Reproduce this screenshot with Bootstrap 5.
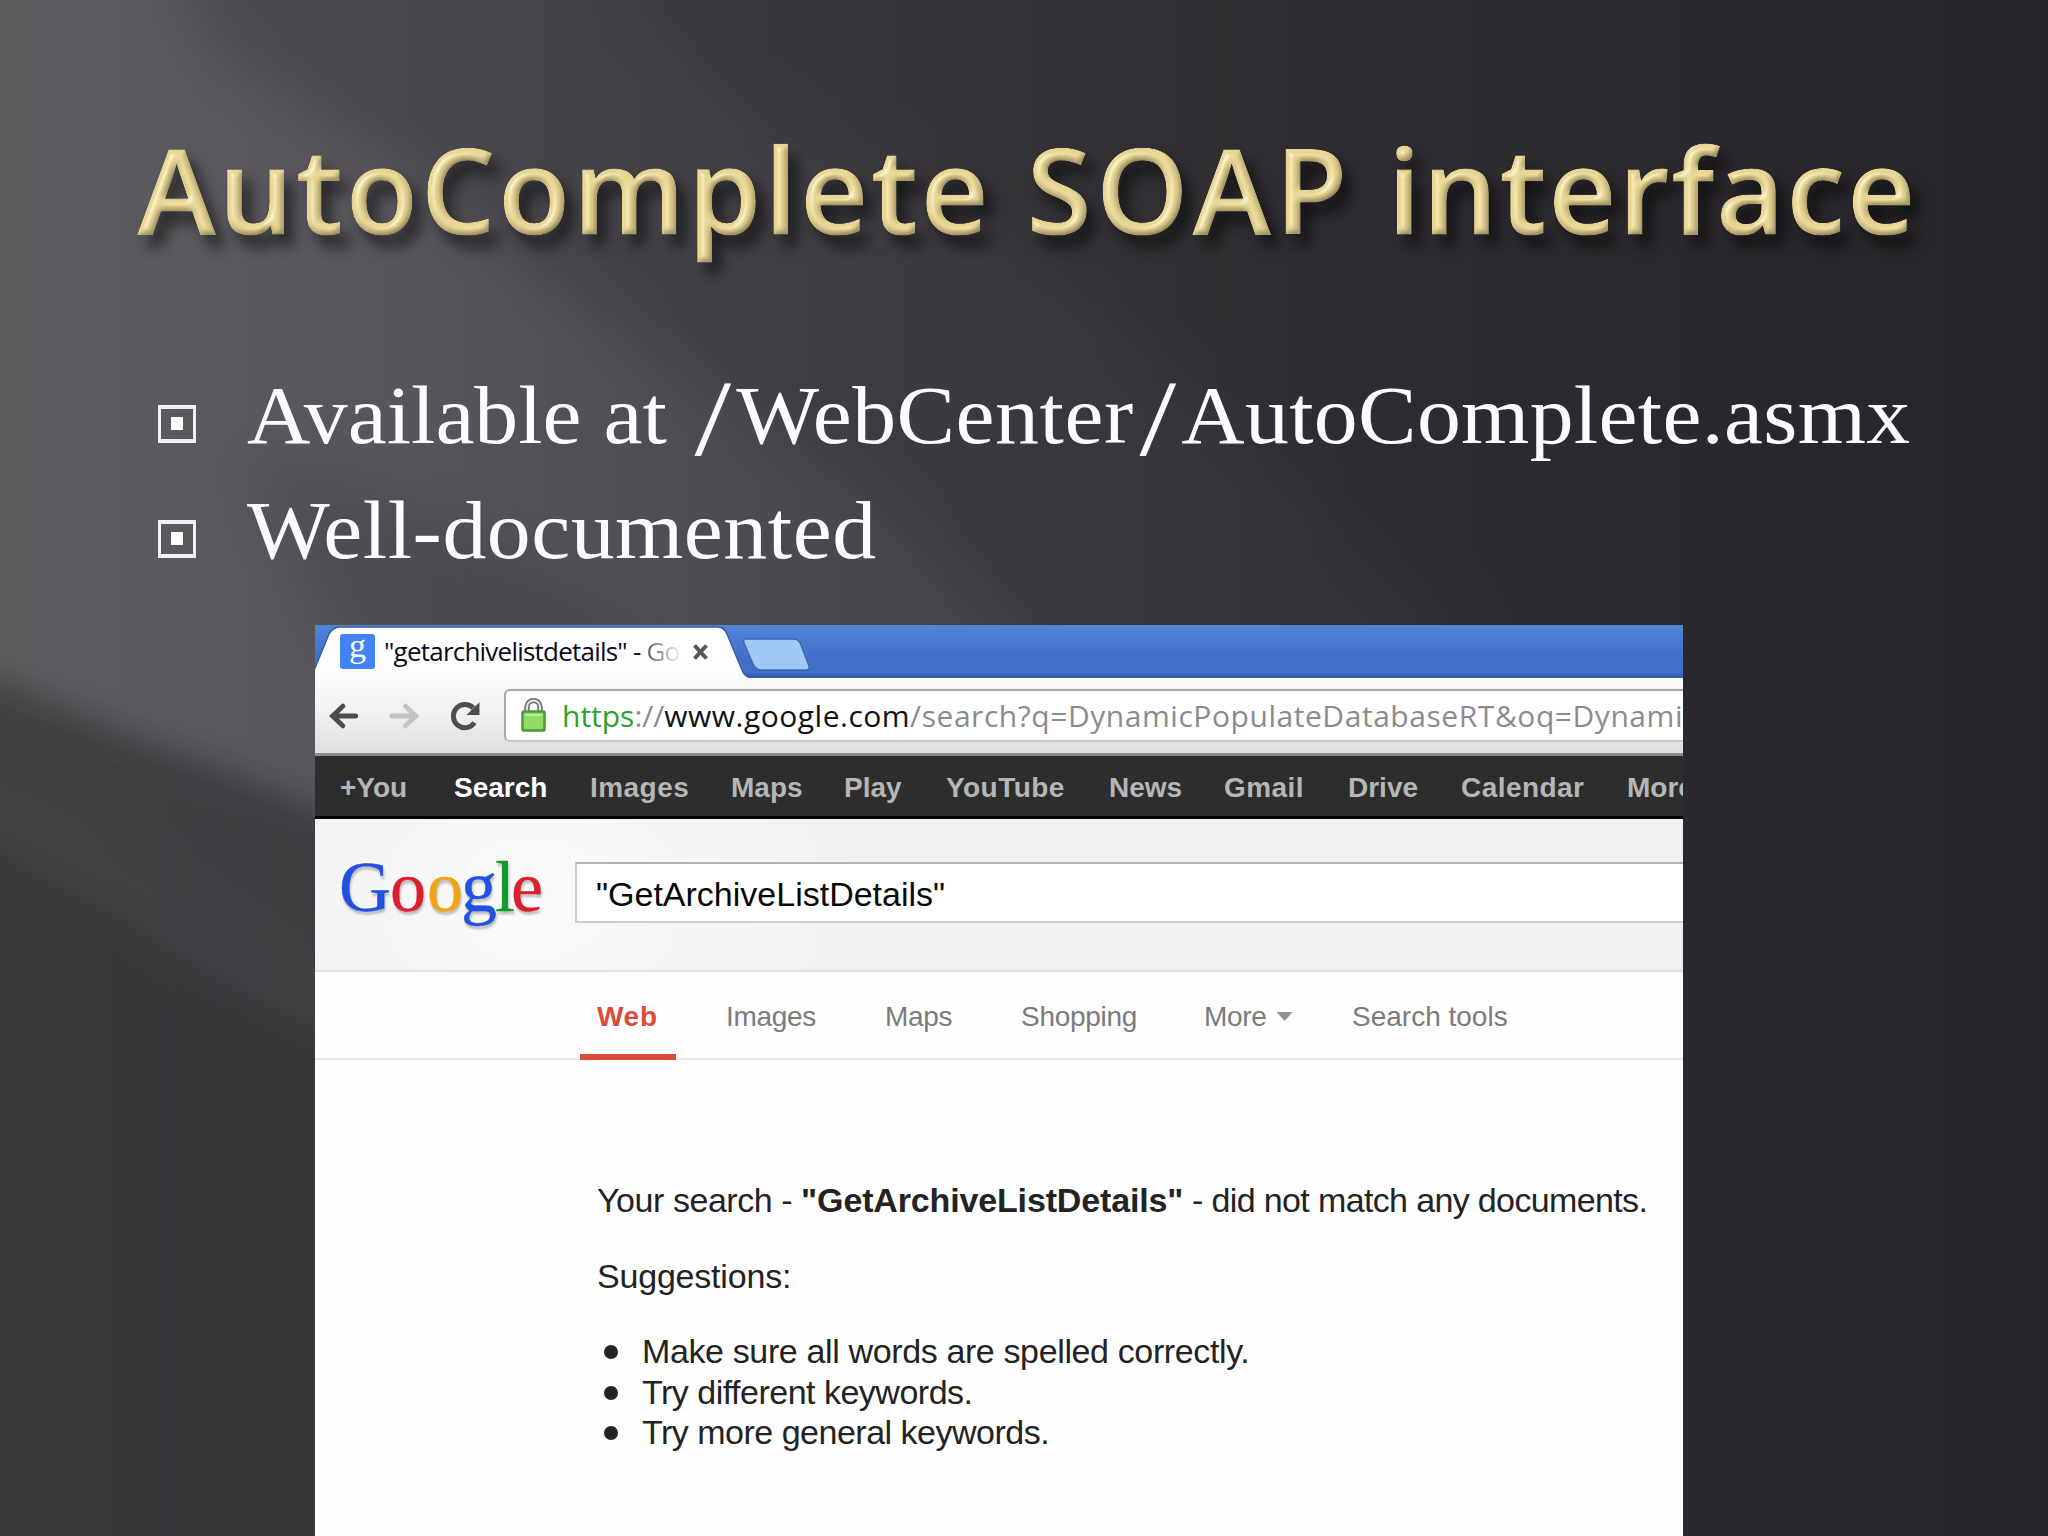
<!DOCTYPE html>
<html lang="en">
<head>
<meta charset="utf-8">
<title>AutoComplete SOAP interface</title>
<link href="https://cdn.jsdelivr.net/npm/bootstrap@5.3.0/dist/css/bootstrap.min.css" rel="stylesheet">
<style>
html,body{height:1536px;overflow:hidden}
body{background:#2d2b2f;font-family:"Liberation Sans",Arial,sans-serif}
.slide{width:2048px;height:1536px}
.backdrop{z-index:0}
.stage{z-index:1}
.headline{padding:129px 0 0 138px;height:358px;font:600 117px/120px "Open Sans","Lucida Sans",sans-serif;color:#ead795;-webkit-text-stroke:1.2px #ead795;filter:url(#bevel)}
.headline span{display:block;white-space:nowrap}
.w-auto1{width:889px;letter-spacing:3.4px}
.w-soap{width:361px;letter-spacing:4.8px}
.w-int{letter-spacing:2.5px}
.points li{height:115px;padding-left:158px;font:82px/115px "Liberation Serif","Palatino Linotype",serif;color:#fdfbff}
.points .txt{transform:scaleX(1.07);transform-origin:0 50%;white-space:nowrap;margin-left:51px}
.points .sl{display:inline-block;width:44.5px;text-align:center;transform:translateY(3px) scale(1.5,1.32)}
.points .wc{letter-spacing:.5px}
.points .ac{letter-spacing:.3px}
.box-mark{width:38px;height:38px;border:4px solid #f3f0f4;border-left-width:3px;border-right-width:3px;margin-top:16px}
.box-mark i{width:12px;height:13px;background:#fff}
.browser{width:1368px;height:911px;margin:37px 0 0 315px;background:#fefefe}
.strip{height:53px;background:linear-gradient(#4f86d6 0,#4f7dd3 10px,#4270c8 32px,#426fc8 47px,#3058a8 53px)}
.tabshape{left:0;top:0}
.tabrow{padding-left:25px}
.tabtitle{font:26px/53px "Open Sans",sans-serif;letter-spacing:-.78px;color:#0b0a1c;width:292px;white-space:nowrap;margin-left:8px}
.tabtitle b{font-weight:400;background:linear-gradient(90deg,#555,#eee);-webkit-background-clip:text;background-clip:text;color:transparent}
.toolbar{height:78px;background:linear-gradient(#faf9fb,#f1f1f2 45%,#dfdfdf);border-bottom:3px solid #8a898b;padding-left:14px}
.toolbar .gapped{margin-left:30px}
.urlbox{height:53px;margin:-1px 0 0 24px;background:#fff;border:2px solid #a9a7a9;border-bottom-color:#c8c6c9;border-right:0;border-radius:6px 0 0 6px;font:30px/49px "Open Sans",sans-serif;color:#8b8b8f;white-space:nowrap;padding-left:15px}
.urlbox .sec{color:#2ba32b}
.urlbox .host{color:#111;letter-spacing:.5px}
.urlbox .rest{letter-spacing:.55px}
.gbar{height:63px;background:#2d2d2e;border-bottom:3px solid #000;padding:4px 0 0 25px;font-weight:700;font-size:28px;line-height:56px;color:#b6b6b6;display:grid;grid-template-columns:114px 136px 141px 113px 102px 163px 115px 124px 113px 166px auto;white-space:nowrap}
.gbar .wide{letter-spacing:.45px}
.ghead{height:153px;border-bottom:2px solid #e2e0e3;background:radial-gradient(ellipse 330px 260px at 215px 80px,#fbfbfb,#f1eff2);padding-top:43px}
.ginput{height:61px;width:1108px;background:#fff;border:2px solid #cfcdd0;border-top-color:#b3b1b4;border-right:0;font-size:34px;line-height:60px;padding-left:19px;color:#080808;margin-left:260px}
.glogo{left:20px;top:30px}
.glogo g{filter:drop-shadow(1px 3px 1px rgba(0,0,0,.25))}
.gnav{height:88px;border-bottom:2px solid #e9e7ea;padding-left:265px;font-size:28px;line-height:89px;color:#7b7b7e;white-space:nowrap}
.gnav div{letter-spacing:-.3px}
.gnav .tools{letter-spacing:0}
.gnav .on{width:96px;height:88px;border-bottom:6px solid #dc4b38;color:#dc4b38;font-weight:700;padding-left:17px;letter-spacing:.7px}
.caret{display:inline-block;vertical-align:5px;width:16px;height:9px;background:#919193;clip-path:polygon(0 0,100% 0,50% 100%);margin-left:10px}
.res{padding:120px 0 0 282px;font-size:34px;line-height:40px;color:#232323;white-space:nowrap}
.res p{margin:0 0 36px}
.res li{height:40.5px;letter-spacing:-.5px}
.res ul{margin-top:-1px!important}
.dotmark{width:14px;height:14px;border-radius:50%;background:#232323;margin:2px 24px 0 7px}
</style>
<script src="https://cdn.jsdelivr.net/npm/bootstrap@5.3.0/dist/js/bootstrap.bundle.min.js"></script>
</head>
<body>
<div class="slide position-relative overflow-hidden">
<svg class="backdrop position-absolute top-0 start-0" width="2048" height="1536" aria-hidden="true">
<defs>
<linearGradient id="base" x1="0" x2="1"><stop offset="0" stop-color="#5e5c5f"/><stop offset=".2" stop-color="#57555b"/><stop offset=".39" stop-color="#4b484e"/><stop offset=".6" stop-color="#413e44"/><stop offset=".8" stop-color="#3a373d"/><stop offset="1" stop-color="#353238"/></linearGradient>
<filter id="b14" x="-20%" y="-20%" width="140%" height="140%"><feGaussianBlur stdDeviation="16"/></filter>
<filter id="b30" x="-20%" y="-20%" width="140%" height="140%"><feGaussianBlur stdDeviation="28"/></filter>
<filter id="bevel" x="-2%" y="-5%" width="104%" height="110%" color-interpolation-filters="sRGB">
<feGaussianBlur in="SourceAlpha" stdDeviation="3" result="h"/>
<feSpecularLighting in="h" surfaceScale="6" specularConstant=".8" specularExponent="22" lighting-color="#fffbe0" result="s"><feDistantLight azimuth="215" elevation="42"/></feSpecularLighting>
<feComposite in="s" in2="SourceAlpha" operator="in" result="si"/>
<feDiffuseLighting in="h" surfaceScale="2.200" diffuseConstant="1.1" lighting-color="#fff" result="d"><feDistantLight azimuth="235" elevation="64"/></feDiffuseLighting>
<feComposite in="d" in2="SourceGraphic" operator="arithmetic" k1="1" result="lit"/>
<feComposite in="lit" in2="SourceAlpha" operator="in" result="li"/>
<feGaussianBlur in="SourceAlpha" stdDeviation="7" result="sb"/><feOffset in="sb" dx="9" dy="12" result="so"/>
<feComponentTransfer in="so" result="sh"><feFuncA type="linear" slope=".55"/></feComponentTransfer>
<feMerge><feMergeNode in="sh"/><feMergeNode in="li"/><feMergeNode in="si"/></feMerge>
</filter>
</defs>
<rect width="2048" height="1536" fill="url(#base)"/>
<g fill="#000">
<path opacity=".15" filter="url(#b30)" d="M150-80L210 50 400 165 530 265 640 335 790 440 890 510 1010 625 1200 820V1700H2300V-80Z"/>
<path opacity=".1" filter="url(#b30)" d="M570-80L620 0 700 75 820 140 1080 290 1260 440 1450 640V1700H2300V-80Z"/>
<path opacity=".11" filter="url(#b30)" d="M250 455L450 520 640 640 400 720 330 640Z"/>
<path opacity=".26" filter="url(#b14)" d="M-80 640L0 680 130 735 220 768 315 808 500 900V1620H-80Z"/>
<path opacity=".08" filter="url(#b30)" d="M-60 740L80 790 340 960 400 1000V860L130 760-60 690Z"/>
<path opacity=".17" filter="url(#b14)" d="M-80 800L0 848 120 915 200 970 315 1035 500 1130V1620H-80Z"/>
</g>
</svg>
<main class="stage position-relative d-flex flex-column">
<h1 class="headline d-flex m-0"><span class="w-auto1">AutoComplete</span><span class="w-soap">SOAP</span><span class="w-int">interface</span></h1>
<ul class="points list-unstyled m-0">
<li class="d-flex align-items-center"><span class="box-mark d-flex align-items-center justify-content-center flex-shrink-0"><i></i></span><span class="txt">Available at <span class="sl">/</span><span class="wc">WebCenter</span><span class="sl">/</span><span class="ac">AutoComplete.asmx</span></span></li>
<li class="d-flex align-items-center"><span class="box-mark d-flex align-items-center justify-content-center flex-shrink-0"><i></i></span><span class="txt wc">Well-documented</span></li>
</ul>
<section class="browser overflow-hidden">
<div class="strip position-relative">
<svg class="tabshape position-absolute" width="520" height="53" viewBox="0 0 520 53" aria-hidden="true">
<defs><linearGradient id="tb" x1="0" x2="0" y1="0" y2="1"><stop offset="0" stop-color="#fff"/><stop offset=".6" stop-color="#fff"/><stop offset="1" stop-color="#faf9fb"/></linearGradient></defs>
<path d="M-2 48L14 9Q18 2 25 2H403Q409 2 412 9L427 45Q430 53 438 53V58H-2Z" fill="url(#tb)" stroke="#355ca6" stroke-width="1.500"/>
<path d="M430 14H478Q484 14 486 20L494 41Q495 45 491 45H447Q441 45 438 39L429 18Q428 14 430 14Z" fill="#a2c8f5" stroke="#3a67b4" stroke-width="1.500"/>
</svg>
<div class="tabrow position-relative d-flex align-items-center h-100">
<svg width="36" height="35" viewBox="0 0 36 35"><rect width="35" height="35" rx="3" fill="#4382f2"/><text x="17.500" y="23" text-anchor="middle" font-family="Liberation Serif,serif" font-size="34" fill="#fff">g</text></svg>
<span class="tabtitle">"getarchivelistdetails" - <b>Go</b></span>
<svg width="18" height="18" viewBox="0 0 18 18" class="ms-3"><path d="M2.500 2.500l12 13M14.500 2.500l-12 13" stroke="#58575a" stroke-width="4"/></svg>
</div>
</div>
<div class="toolbar d-flex align-items-center">
<svg width="34" height="32" viewBox="0 0 34 32"><path d="M30 16H5M15.500 5L4 16l11.500 11" fill="none" stroke="#4d4c4e" stroke-width="5.500" stroke-linecap="round"/></svg>
<svg class="gapped" width="34" height="32" viewBox="0 0 34 32"><path d="M3 16h26M18.500 5L30 16 18.500 27" fill="none" stroke="#c3c2c4" stroke-width="5.500" stroke-linecap="round"/></svg>
<svg class="gapped" width="34" height="34" viewBox="0 0 34 34"><path d="M27.500 24.500A13 13 0 1 1 26 8" fill="none" stroke="#4d4c4e" stroke-width="5.500"/><path d="M33 1.500V16H18.500Z" fill="#4d4c4e"/></svg>
<div class="urlbox flex-grow-1 d-flex align-items-center">
<svg class="flex-shrink-0" width="25" height="34" viewBox="0 0 25 34"><path d="M6 15V9a6.500 6.500 0 0 1 13 0v6" fill="none" stroke="#77757a" stroke-width="5.500"/><path d="M6 15V9a6.500 6.500 0 0 1 13 0v6" fill="none" stroke="#e4e3e6" stroke-width="2"/><rect x="1.500" y="13.500" width="22" height="19" rx="1" fill="#93d967" stroke="#4b9a37" stroke-width="2.500"/><path d="M4 17h17" stroke="#b9ee94" stroke-width="2"/></svg>
<span class="ms-3"><span class="sec">https</span>://<span class="host">www.google.com</span><span class="rest">/search?q=DynamicPopulateDatabaseRT&amp;oq=Dynami</span></span>
</div>
</div>
<nav class="gbar"><span>+You</span><span class="text-white">Search</span><span class="wide">Images</span><span>Maps</span><span>Play</span><span class="wide">YouTube</span><span>News</span><span class="wide">Gmail</span><span>Drive</span><span class="wide">Calendar</span><span>More</span></nav>
<header class="ghead position-relative">
<svg class="glogo position-absolute" width="220" height="100" aria-label="Google"><g font-family="Liberation Serif,serif" font-size="72"><text y="62" stroke-width=".3"><tspan x="4" fill="#2350e0" stroke="#2350e0">G</tspan><tspan x="55" fill="#d8202f" stroke="#d8202f">o</tspan><tspan x="92" fill="#f0a317" stroke="#f0a317">o</tspan><tspan x="126" fill="#2350e0" stroke="#2350e0">g</tspan><tspan x="160" fill="#10992a" stroke="#10992a">l</tspan><tspan x="176" fill="#d8202f" stroke="#d8202f">e</tspan></text></g></svg>
<div class="ginput">"GetArchiveListDetails"</div>
</header>
<nav class="gnav d-flex"><div class="on">Web</div><div style="margin-left:50px;width:159px">Images</div><div style="width:136px">Maps</div><div style="width:183px">Shopping</div><div style="width:148px">More<span class="caret"></span></div><div class="tools">Search tools</div></nav>
<div class="res">
<p><span style="letter-spacing:-.45px">Your search - </span><b style="letter-spacing:-.15px">"GetArchiveListDetails"</b><span style="letter-spacing:-.64px"> - did not match any documents.</span></p>
<p style="letter-spacing:-.2px">Suggestions:</p>
<ul class="list-unstyled m-0"><li class="d-flex align-items-center" style="letter-spacing:-.37px"><span class="dotmark"></span>Make sure all words are spelled correctly.</li><li class="d-flex align-items-center"><span class="dotmark"></span>Try different keywords.</li><li class="d-flex align-items-center"><span class="dotmark"></span>Try more general keywords.</li></ul>
</div>
</section>
</main>
</div>
</body>
</html>
